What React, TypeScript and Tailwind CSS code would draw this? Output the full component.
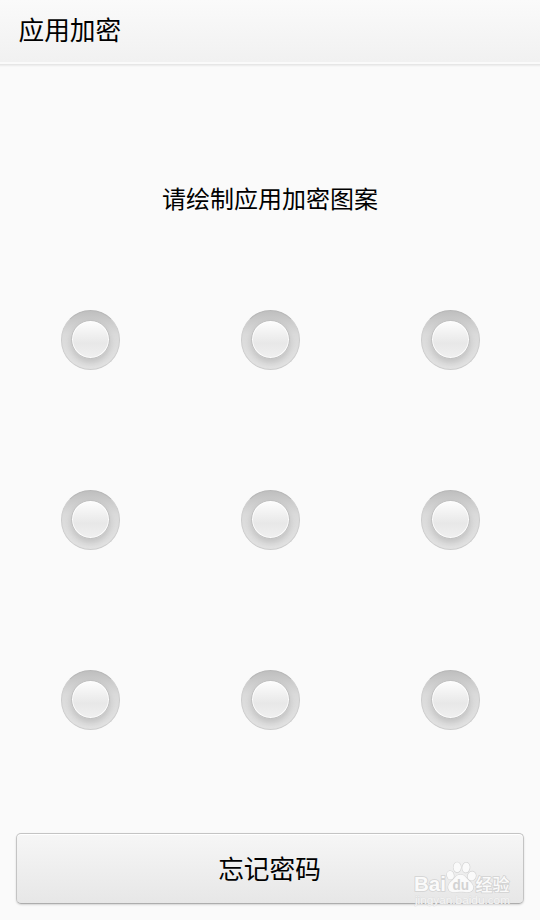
import React from 'react';

const DOTS = [1, 2, 3, 4, 5, 6, 7, 8, 9];

const PatternDot: React.FC = () => (
  <div className="flex h-[180px] items-center justify-center pl-px">
    <div className="flex h-[60px] w-[59px] items-center justify-center rounded-full border border-[#cdcdcd] border-t-[#b6b6b6] bg-linear-to-b from-[#bfbfbf] via-[#dadada] via-40% to-[#e2e2e2] pb-px">
      <div className="h-[39px] w-[39px] shrink-0 rounded-full border border-[#c0c0c0] bg-linear-to-b from-[#fdfdfd] via-[#e8e8e8] via-60% to-[#f0f0f0] shadow-[0_4px_6px_rgba(0,0,0,0.13),inset_0_0_0_1px_rgba(255,255,255,0.85)]" />
    </div>
  </div>
);

const Watermark: React.FC = () => (
  <svg
    className="pointer-events-none absolute top-[27px] left-[398px]"
    width="110"
    height="48"
    viewBox="0 0 110 48"
    fill="#fafafa"
    stroke="#d2d2d2"
    strokeWidth="1.6"
    paintOrder="stroke"
  >
    <text x="0" y="31" fontFamily="Liberation Sans, Arial, sans-serif" fontWeight="700" fontSize="20" textLength="32" lengthAdjust="spacingAndGlyphs">Bai</text>
    {/* Paw */}
    <g strokeWidth="1.2">
      <ellipse cx="36.4" cy="15.3" rx="3.4" ry="4.3" transform="rotate(-12 36.4 15.3)" />
      <ellipse cx="43.2" cy="7.3" rx="3.7" ry="5" />
      <ellipse cx="52" cy="7.6" rx="3.7" ry="5" transform="rotate(8 52 7.6)" />
      <ellipse cx="57.8" cy="16" rx="4" ry="4.6" transform="rotate(18 57.8 16)" />
      <path d="M46.5 14.5C42.5 14.5 41 18 38.3 20.4C35.2 23 33.6 25 34.2 28.3C35.2 32.8 39.5 32.4 43 32C46 31.6 48 31.6 51 32C54.5 32.4 58.4 32.5 59.2 28.3C59.8 25 57.6 23 54.8 20.4C52 18 50.5 14.5 46.5 14.5Z" />
    </g>
    <text x="38.5" y="30" fontFamily="Liberation Sans, Arial, sans-serif" fontWeight="700" fontSize="14" textLength="16.5" lengthAdjust="spacingAndGlyphs" fill="#d2d2d2" stroke="none">du</text>
    <text x="61.5" y="31" fontFamily="Noto Sans CJK SC, sans-serif" fontWeight="500" fontSize="17">经验</text>
    <text x="1" y="44" fontFamily="Liberation Sans, Arial, sans-serif" fontSize="10.5" textLength="95" lengthAdjust="spacingAndGlyphs" stroke="#dadada" strokeWidth="0.7" fillOpacity="0.85">jingyan.baidu.com</text>
  </svg>
);

const App: React.FC = () => {
  return (
    <div className="flex h-[920px] w-[540px] flex-col overflow-hidden bg-[#fafafa] font-['Noto_Sans_CJK_SC',sans-serif] text-black">
      <header className="flex h-16 shrink-0 items-center border-b-2 border-[#fafafa] bg-linear-to-b from-[#fafafa] to-[#f1f1f1] bg-clip-padding pb-[5px] pl-[18.5px] shadow-[0_1px_0_#e6e6e6,0_2px_0_#eeeeee,0_3px_0_#f6f6f6]">
        <h1 className="text-[25.7px] leading-none">应用加密</h1>
      </header>

      <p className="flex h-[186px] shrink-0 items-start justify-center pt-[122px] text-2xl leading-none">
        请绘制应用加密图案
      </p>

      <div className="grid shrink-0 grid-cols-3">
        {DOTS.map((dot) => (
          <PatternDot key={dot} />
        ))}
      </div>

      <div className="relative mx-4 mt-[43px]">
        <button className="flex h-[71px] w-full items-center justify-center rounded-[5px] border border-[#c4c4c4] border-b-[#adadad] bg-linear-to-b from-[#f6f6f6] to-[#e7e7e7] pr-px pb-px text-[25.7px] leading-none shadow-[0_1px_2px_rgba(0,0,0,0.15),inset_0_1px_0_#ffffff]">
          忘记密码
        </button>
        <Watermark />
      </div>
    </div>
  );
};

export default App;
